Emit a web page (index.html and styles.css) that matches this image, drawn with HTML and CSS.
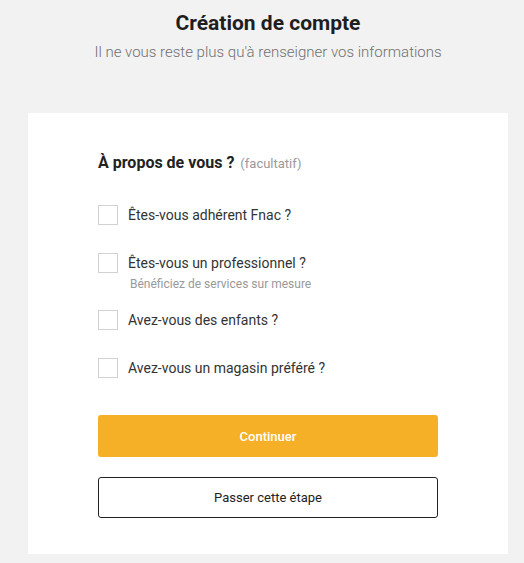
FILE: index.html
```html
<!DOCTYPE html>
<html lang="fr">
<head>
<meta charset="utf-8">
<link rel="stylesheet" href="styles.css">
</head>
<body>
<header class="top">
  <h1 class="title">Création de compte</h1>
  <p class="subtitle">Il ne vous reste plus qu'à renseigner vos informations</p>
</header>
<main class="card">
  <h2 class="section"><span class="section-main">À propos de vous ?</span> <span class="optional">(facultatif)</span></h2>
  <ul class="options">
    <li class="option">
      <label class="row"><span class="box"></span><span class="label">Êtes-vous adhérent Fnac ?</span></label>
    </li>
    <li class="option">
      <label class="row"><span class="box"></span><span class="label">Êtes-vous un professionnel ?</span></label>
      <p class="hint">Bénéficiez de services sur mesure</p>
    </li>
    <li class="option">
      <label class="row"><span class="box"></span><span class="label">Avez-vous des enfants ?</span></label>
    </li>
    <li class="option">
      <label class="row"><span class="box"></span><span class="label">Avez-vous un magasin préféré ?</span></label>
    </li>
  </ul>
  <button class="btn btn-primary">Continuer</button>
  <button class="btn btn-secondary">Passer cette étape</button>
</main>
</body>
</html>
```

FILE: styles.css
```css
* { box-sizing: border-box; }
html, body { margin: 0; padding: 0; }
body {
  background: #f2f2f2;
  font-family: Roboto, "Liberation Sans", sans-serif;
  color: #222;
  width: 524px;
}
.top {
  text-align: center;
  padding-top: 11px;
  margin-left: 28px;
  width: 480px;
}
.title {
  margin: 0;
  font-size: 21px;
  line-height: 25px;
  font-weight: 700;
  color: #1e1e1e;
}
.subtitle {
  margin: 6px -30px 0;
  font-size: 15px;
  line-height: 20px;
  font-weight: 300;
  color: #707070;
}
.card {
  margin: 51px 16px 0 28px;
  width: 480px;
  background: #fff;
  padding: 40px 70px 36px;
  display: flex;
  flex-direction: column;
}
.section {
  margin: 0;
  font-size: 16px;
  line-height: 20px;
  font-weight: 700;
  color: #222;
}
.optional {
  font-size: 13px;
  font-weight: 400;
  color: #9a9a9a;
  margin-left: 2px;
}
.options {
  list-style: none;
  margin: 31px 0 0;
  padding: 0;
  display: flex;
  flex-direction: column;
}
.option { margin-bottom: 28px; }
.option:last-child { margin-bottom: 0; }
.row {
  display: flex;
  align-items: center;
  gap: 10px;
  height: 20px;
}
.box {
  width: 20px;
  height: 20px;
  border: 1px solid #d2d2d2;
  background: #fff;
  flex: none;
}
.label {
  font-size: 14px;
  line-height: 20px;
  color: #333;
}
.hint {
  margin: 3px 0 -10px 32px;
  font-size: 12px;
  line-height: 16px;
  color: #999;
}
.btn {
  display: block;
  width: 340px;
  font-family: Roboto, "Liberation Sans", sans-serif;
  font-size: 13px;
  border-radius: 3px;
  cursor: pointer;
}
.btn-primary {
  margin-top: 37px;
  height: 42px;
  background: #f5b027;
  border: none;
  color: #fff;
  font-weight: 500;
}
.btn-secondary {
  margin-top: 20px;
  height: 41px;
  background: #fff;
  border: 1px solid #222;
  color: #222;
  font-weight: 400;
}
```
